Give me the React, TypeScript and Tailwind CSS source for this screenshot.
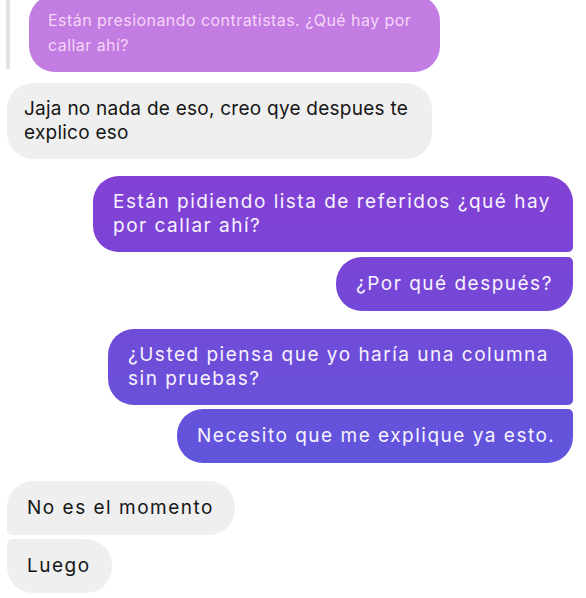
import type { ReactNode } from 'react';

type Side = 'me' | 'them';

type BubbleProps = {
    side: Side;
    width: string;
    corners: string;
    bg: string;
    tracking?: string;
    pad?: string;
    children: ReactNode;
};

function Bubble({ side, width, corners, bg, tracking = 'tracking-[1.5px]', pad = 'py-[15px]', children }: BubbleProps) {
    return (
        <div className={side === 'me' ? 'flex justify-end pr-[13px]' : 'flex justify-start pl-[7px]'}>
            <div
                className={`${width} ${corners} ${bg} ${tracking} ${pad} px-5 text-[19px] leading-[24px] whitespace-nowrap ${
                    side === 'me' ? 'text-[#f7f3ff]' : 'text-[#161616]'
                }`}
            >
                {children}
            </div>
        </div>
    );
}

export default function App() {
    return (
        <div className="h-[598px] w-[586px] overflow-hidden bg-white font-['Inter','Liberation_Sans',sans-serif]">
            {/* quoted reply */}
            <div className="-mt-[5px] flex items-stretch pl-[6px]">
                <div className="mt-[5px] mb-[3px] w-[4px] bg-[#e2e2e2]" />
                <div className="ml-[19px] w-[411px] rounded-[26px] bg-[#c27ce2] px-[19px] pt-[13px] pb-[14px] text-[16px] leading-[25px] tracking-[0.45px] whitespace-nowrap text-[#f5d6f7]">
                    Están presionando contratistas. ¿Qué hay por
                    <br />
                    callar ahí?
                </div>
            </div>

            <div className="mt-[11px] flex flex-col">
                <Bubble side="them" width="w-[425px]" corners="rounded-[26px]" bg="bg-[#efefef]" tracking="tracking-[0.25px]" pad="py-[14px]">
                    <span className="-ml-[3px] block">
                        Jaja no nada de eso, creo qye despues te
                        <br />
                        explico eso
                    </span>
                </Bubble>

                <div className="mt-[17px] flex flex-col gap-[5px]">
                    <Bubble side="me" width="w-[480px]" corners="rounded-[26px] rounded-br-[5px]" bg="bg-linear-to-b from-[#8341d5] to-[#7b44d6]" pad="py-[14px]">
                        Están pidiendo lista de referidos ¿qué hay
                        <br />
                        por callar ahí?
                    </Bubble>
                    <Bubble side="me" width="w-[237px]" corners="rounded-[26px] rounded-tr-[5px]" bg="bg-linear-to-b from-[#7a45d6] to-[#7449d7]">
                        ¿Por qué después?
                    </Bubble>
                </div>

                <div className="mt-[18px] flex flex-col gap-[4px]">
                    <Bubble side="me" width="w-[465px]" corners="rounded-[26px] rounded-br-[5px]" bg="bg-linear-to-b from-[#704cd8] to-[#6950da]" pad="py-[14px]">
                        ¿Usted piensa que yo haría una columna
                        <br />
                        sin pruebas?
                    </Bubble>
                    <Bubble side="me" width="w-[396px]" corners="rounded-[26px] rounded-tr-[5px]" bg="bg-linear-to-b from-[#6652da] to-[#6055dc]">
                        Necesito que me explique ya esto.
                    </Bubble>
                </div>

                <div className="mt-[18px] flex flex-col gap-[4px]">
                    <Bubble side="them" width="w-[228px]" corners="rounded-[26px] rounded-bl-[5px]" bg="bg-[#efefef]">
                        No es el momento
                    </Bubble>
                    <Bubble side="them" width="w-[105px]" corners="rounded-[26px] rounded-tl-[5px]" bg="bg-[#efefef]">
                        Luego
                    </Bubble>
                </div>
            </div>
        </div>
    );
}
